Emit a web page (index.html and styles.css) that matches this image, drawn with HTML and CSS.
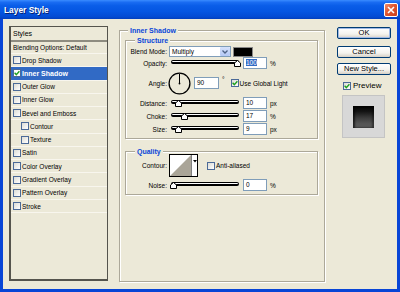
FILE: index.html
```html
<!DOCTYPE html>
<html>
<head>
    <title>Layer Style</title>
    <link rel="stylesheet" href="styles.css">
</head>
<body>

<div class="window">
    <!-- Title bar -->
    <div class="titlebar">
        <span class="title">Layer Style</span>
        <span class="close-btn">
            <svg width="8" height="8" viewBox="0 0 8 8"><path d="M1 1 L7 7 M7 1 L1 7" stroke="#fff" stroke-width="1.6"/></svg>
        </span>
    </div>

    <div class="dialog">
        <!-- Styles list -->
        <div class="styles-list">
            <div class="list-head">Styles</div>
            <div class="list-row blend-row">Blending Options: Default</div>
            <div class="list-row"><span class="cb"></span>Drop Shadow</div>
            <div class="list-row selected"><span class="cb"><svg width="6" height="6" viewBox="0 0 6 6"><path d="M0.6 2.8 L2.3 4.6 L5.4 1.2" fill="none" stroke="#21a121" stroke-width="1.4"/></svg></span>Inner Shadow</div>
            <div class="list-row"><span class="cb"></span>Outer Glow</div>
            <div class="list-row"><span class="cb"></span>Inner Glow</div>
            <div class="list-row"><span class="cb"></span>Bevel and Emboss</div>
            <div class="list-row sub"><span class="cb"></span>Contour</div>
            <div class="list-row sub"><span class="cb"></span>Texture</div>
            <div class="list-row"><span class="cb"></span>Satin</div>
            <div class="list-row"><span class="cb"></span>Color Overlay</div>
            <div class="list-row"><span class="cb"></span>Gradient Overlay</div>
            <div class="list-row"><span class="cb"></span>Pattern Overlay</div>
            <div class="list-row"><span class="cb"></span>Stroke</div>
        </div>

        <!-- Inner Shadow settings -->
        <div class="group main-group">
            <span class="legend legend-main">Inner Shadow</span>

            <div class="group structure">
                <span class="legend">Structure</span>

                <div class="row row-blend">
                    <span class="lbl">Blend Mode:</span>
                    <div class="select">
                        <span class="select-text">Multiply</span>
                        <span class="select-arrow">
                            <svg width="6" height="4" viewBox="0 0 6 4"><path d="M0.5 0.5 L3 3 L5.5 0.5" fill="none" stroke="#4d6185" stroke-width="1.3"/></svg>
                        </span>
                    </div>
                    <span class="swatch"></span>
                </div>

                <div class="row row-slider">
                    <span class="lbl">Opacity:</span>
                    <div class="slider">
                        <div class="track"></div>
                        <svg class="thumb" style="left:63px" width="7" height="7" viewBox="0 0 7 7"><polygon points="0.5,6.5 0.5,3 3.5,0.5 6.5,3 6.5,6.5" fill="#fff" stroke="#000"/></svg>
                    </div>
                    <span class="num"><span class="sel-text">100</span></span>
                    <span class="unit">%</span>
                </div>

                <div class="row row-angle">
                    <span class="lbl">Angle:</span>
                    <svg class="dial" width="23" height="23" viewBox="0 0 23 23">
                        <circle cx="11.5" cy="11.5" r="10.4" fill="none" stroke="#000" stroke-width="1.3"/>
                        <path d="M11.5 11.5 L11.5 2" stroke="#000" stroke-width="1"/>
                        <circle cx="11.5" cy="11.5" r="0.9" fill="#000"/>
                    </svg>
                    <span class="num num-angle">90</span>
                    <span class="deg">°</span>
                    <span class="cb cb-light"><svg width="6" height="6" viewBox="0 0 6 6"><path d="M0.6 2.8 L2.3 4.6 L5.4 1.2" fill="none" stroke="#21a121" stroke-width="1.4"/></svg></span>
                    <span class="cb-text">Use Global Light</span>
                </div>

                <div class="row row-slider row-first">
                    <span class="lbl">Distance:</span>
                    <div class="slider">
                        <div class="track"></div>
                        <svg class="thumb" style="left:4px" width="7" height="7" viewBox="0 0 7 7"><polygon points="0.5,6.5 0.5,3 3.5,0.5 6.5,3 6.5,6.5" fill="#fff" stroke="#000"/></svg>
                    </div>
                    <span class="num">10</span>
                    <span class="unit">px</span>
                </div>

                <div class="row row-slider row-next">
                    <span class="lbl">Choke:</span>
                    <div class="slider">
                        <div class="track"></div>
                        <svg class="thumb" style="left:10px" width="7" height="7" viewBox="0 0 7 7"><polygon points="0.5,6.5 0.5,3 3.5,0.5 6.5,3 6.5,6.5" fill="#fff" stroke="#000"/></svg>
                    </div>
                    <span class="num">17</span>
                    <span class="unit">%</span>
                </div>

                <div class="row row-slider row-next">
                    <span class="lbl">Size:</span>
                    <div class="slider">
                        <div class="track"></div>
                        <svg class="thumb" style="left:4px" width="7" height="7" viewBox="0 0 7 7"><polygon points="0.5,6.5 0.5,3 3.5,0.5 6.5,3 6.5,6.5" fill="#fff" stroke="#000"/></svg>
                    </div>
                    <span class="num">9</span>
                    <span class="unit">px</span>
                </div>
            </div>

            <div class="group quality">
                <span class="legend">Quality</span>

                <div class="row row-contour">
                    <span class="lbl">Contour:</span>
                    <div class="contour">
                        <svg width="21" height="21" viewBox="0 0 21 21"><rect width="21" height="21" fill="#fff"/><polygon points="0,21 21,0 21,21" fill="#aaa598"/></svg>
                        <span class="contour-arrow">
                            <svg width="4" height="3" viewBox="0 0 4 3"><polygon points="0,0 4,0 2,2.5" fill="#000"/></svg>
                        </span>
                    </div>
                    <span class="cb cb-aa"></span>
                    <span class="cb-text">Anti-aliased</span>
                </div>

                <div class="row row-slider row-noise">
                    <span class="lbl">Noise:</span>
                    <div class="slider">
                        <div class="track"></div>
                        <svg class="thumb" style="left:-1px" width="7" height="7" viewBox="0 0 7 7"><polygon points="0.5,6.5 0.5,3 3.5,0.5 6.5,3 6.5,6.5" fill="#fff" stroke="#000"/></svg>
                    </div>
                    <span class="num">0</span>
                    <span class="unit">%</span>
                </div>
            </div>
        </div>

        <!-- Buttons and preview -->
        <div class="side">
            <div class="btn btn-default">OK</div>
            <div class="btn btn-cancel">Cancel</div>
            <div class="btn btn-new">New Style...</div>
            <div class="preview-row">
                <span class="cb"><svg width="6" height="6" viewBox="0 0 6 6"><path d="M0.6 2.8 L2.3 4.6 L5.4 1.2" fill="none" stroke="#21a121" stroke-width="1.4"/></svg></span>
                <span class="preview-text">Preview</span>
            </div>
            <div class="preview-box">
                <div class="preview-square"></div>
            </div>
        </div>
    </div>
</div>

</body>
</html>
```

FILE: styles.css
```css
body {
    margin: 0;
    background: #ECE9D8;
    font-family: "Liberation Sans", Arial, sans-serif;
}

.window {
    width: 400px;
    height: 292px;
    overflow: hidden;
}

.titlebar {
    height: 19px;
    display: flex;
    align-items: center;
    padding: 0 2px 0 4px;
    background: linear-gradient(#3a8cff 0%, #1a6cf2 12%, #0a5de8 30%, #0556e2 60%, #034bd3 88%, #023fbd 100%);
}

.title {
    color: #fff;
    font-weight: bold;
    font-size: 8.4px;
    text-shadow: 1px 1px 0 #0a1f6e;
}

.close-btn {
    margin-left: auto;
    width: 12px;
    height: 12px;
    border: 1px solid #fff;
    border-radius: 2px;
    background: linear-gradient(135deg, #f08d6d 0%, #e0562f 45%, #c8401f 100%);
    display: flex;
    align-items: center;
    justify-content: center;
}

.dialog {
    height: 273px;
    box-sizing: border-box;
    border: 3px solid #0845d6;
    border-top: none;
    display: flex;
    align-items: flex-start;
    padding: 7px 0 0 6px;
}

/* Styles list */
.styles-list {
    width: 99px;
    height: 255px;
    box-sizing: border-box;
    border: 1px solid #55544d;
    border-bottom-width: 2px;
    border-left-width: 2px;
    font-size: 6.5px;
    color: #000;
}

.list-head {
    height: 13px;
    line-height: 13px;
    padding-left: 2px;
    font-size: 7px;
    border-bottom: 2px solid #8e8c80;
}

.list-row {
    height: 12.27px;
    border-bottom: 1px solid #f8f6ee;
    display: flex;
    align-items: center;
    padding-left: 2px;
}

.list-row .cb {
    margin-right: 1px;
}

.blend-row {
    height: 11px;
}

.list-row.sub {
    padding-left: 10px;
}

.list-row.selected {
    background: #316ac5;
    color: #fff;
    font-weight: bold;
    font-size: 7px;
}

.cb {
    width: 6px;
    height: 6px;
    flex: none;
    border: 1px solid #4b6a98;
    background: linear-gradient(135deg, #dcdcd5, #fff);
    display: inline-flex;
    align-items: center;
    justify-content: center;
}

.selected .cb {
    background: #fff;
}

/* Group boxes */
.group {
    position: relative;
    box-sizing: border-box;
    border: 1px solid #aca899;
    box-shadow: inset 1px 1px 0 #fff, 1px 1px 0 #fff;
}

.legend {
    position: absolute;
    top: -5px;
    left: 9px;
    padding: 0 2px;
    line-height: 9px;
    background: #ECE9D8;
    color: #0846d8;
    font-weight: bold;
    font-size: 7px;
}

.legend-main {
    left: 8px;
}

.main-group {
    width: 206px;
    height: 252px;
    margin: 4px 0 0 11px;
    padding: 9px 6px 0 5px;
}

.structure {
    height: 99px;
    padding-top: 5px;
}

.quality {
    height: 44px;
    margin-top: 12px;
    padding-top: 2px;
}

/* Rows */
.row {
    display: flex;
    align-items: center;
    font-size: 6.5px;
    color: #000;
}

.lbl {
    width: 41px;
    margin-right: 2px;
    text-align: right;
    flex: none;
}

.row-blend {
    height: 11px;
}

.row-slider {
    height: 12px;
}

.row-angle {
    height: 22px;
    margin-top: 3px;
}

.row-first {
    margin-top: 3px;
}

.row-next {
    margin-top: 1px;
}

.row-contour {
    height: 23px;
}

.row-noise {
    margin-top: 2px;
}

.select {
    width: 62px;
    height: 11px;
    box-sizing: border-box;
    border: 1px solid #7f9db9;
    background: #fff;
    display: flex;
    align-items: center;
}

.select-text {
    padding-left: 2px;
}

.select-arrow {
    margin-left: auto;
    margin-right: 0;
    width: 10px;
    height: 9px;
    border-radius: 1px;
    background: linear-gradient(#d6e2fb, #b4c8f6);
    display: flex;
    align-items: center;
    justify-content: center;
}

.swatch {
    width: 20px;
    height: 10px;
    margin-left: 2px;
    background: #000;
    border: 1px solid #888;
    box-sizing: border-box;
}

.slider {
    position: relative;
    width: 68px;
    height: 12px;
    margin-left: 2px;
    flex: none;
}

.track {
    height: 1px;
    margin-top: 3px;
    background: #fff;
    border: 1px solid #000;
    border-bottom-width: 2px;
    border-radius: 2px;
}

.thumb {
    position: absolute;
    top: 3px;
}

.num {
    width: 24px;
    height: 12px;
    box-sizing: border-box;
    margin-left: 4px;
    border: 1px solid #7f9db9;
    background: #fff;
    padding-left: 2px;
    line-height: 10px;
    flex: none;
}

.sel-text {
    background: #316ac5;
    color: #fff;
}

.unit {
    margin-left: 3px;
}

.dial {
    flex: none;
    margin-left: -1px;
}

.num-angle {
    width: 25px;
    margin-left: 3px;
}

.deg {
    align-self: flex-start;
    margin: 4px 0 0 3px;
}

.cb-light {
    margin-left: 6px;
}

.cb-text {
    margin-left: 1px;
}

.contour {
    display: flex;
    border: 1px solid #000;
    height: 21px;
}

.contour svg {
    display: block;
}

.contour-arrow {
    width: 6px;
    background: #fff;
    border-left: 1px solid #808080;
    display: flex;
    justify-content: center;
    padding-top: 5px;
    box-sizing: border-box;
}

.cb-aa {
    margin-left: 9px;
}

/* Side column */
.side {
    width: 54px;
    margin: 1px 0 0 12px;
    display: flex;
    flex-direction: column;
}

.btn {
    height: 12px;
    box-sizing: border-box;
    border: 1px solid #003c74;
    border-radius: 2px;
    background: linear-gradient(#fff 0%, #f4f3ee 60%, #d6d0c5 100%);
    font-size: 7.5px;
    line-height: 10px;
    text-align: center;
    color: #000;
}

.btn-default {
    box-shadow: inset 0 0 0 1px #9fb9e6;
}

.btn-cancel {
    margin-top: 7px;
}

.btn-new {
    margin-top: 5px;
}

.preview-row {
    margin: 6px 0 0 6px;
    height: 9px;
    display: flex;
    align-items: center;
}

.preview-text {
    margin-left: 2px;
    font-size: 8px;
}

.preview-box {
    width: 43px;
    height: 43px;
    margin: 5px 0 0 5px;
    box-sizing: border-box;
    border: 1px solid #c4c4c4;
    background: #d8d8d8;
    display: flex;
    align-items: center;
    justify-content: center;
}

.preview-square {
    width: 21px;
    height: 22px;
    background: linear-gradient(#000 0%, #141414 25%, #3d3d3d 55%, #555 80%, #5a5a5a 100%);
    box-shadow: inset 2px 0 2px rgba(0,0,0,0.6), inset -2px 0 2px rgba(0,0,0,0.4);
}
```
